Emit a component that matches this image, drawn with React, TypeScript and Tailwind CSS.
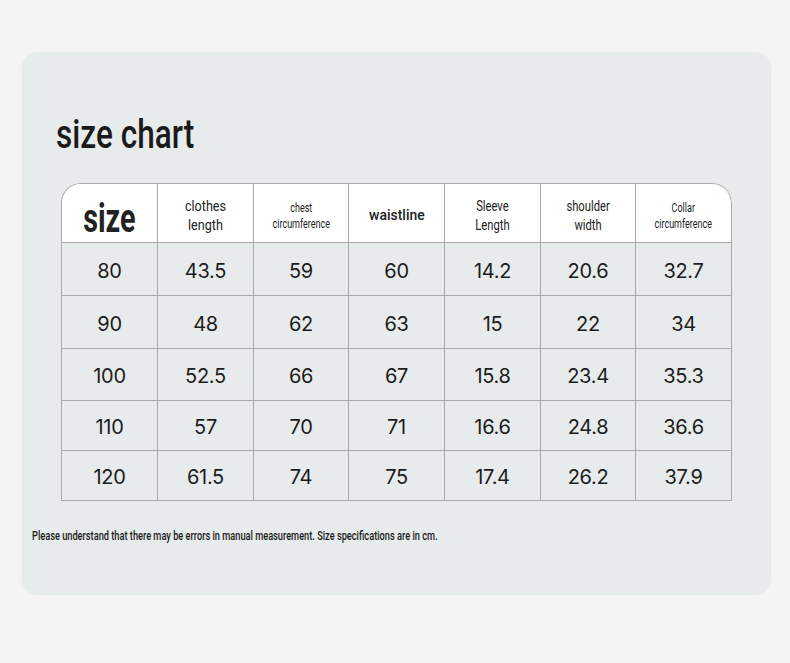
const COLS = ['w-[96px]', 'w-[96px]', 'w-[95px]', 'w-[96px]', 'w-[96px]', 'w-[95px]', 'w-[96px]']

const ROWS: { h: string; values: string[] }[] = [
  { h: 'h-[53px]', values: ['80', '43.5', '59', '60', '14.2', '20.6', '32.7'] },
  { h: 'h-[53px]', values: ['90', '48', '62', '63', '15', '22', '34'] },
  { h: 'h-[52px]', values: ['100', '52.5', '66', '67', '15.8', '23.4', '35.3'] },
  { h: 'h-[50px]', values: ['110', '57', '70', '71', '16.6', '24.8', '36.6'] },
  { h: 'h-[50px]', values: ['120', '61.5', '74', '75', '17.4', '26.2', '37.9'] },
]

// condensed look: Roboto squeezed horizontally
const cond = "font-['Roboto',sans-serif]"

function HeaderCell({ children, className = '', textClass = '' }: { children: React.ReactNode; className?: string; textClass?: string }) {
  return (
    <div className={`flex items-center justify-center pt-[5px] text-center border-r border-b border-[#a9a9a9] text-[#222] ${className}`}>
      <span className={`inline-block whitespace-nowrap ${cond} ${textClass}`}>{children}</span>
    </div>
  )
}

export default function App() {
  return (
    <div className="w-[790px] h-[663px] bg-[#f4f4f4] pt-[52px] pl-[22px]">
      <div className="w-[749px] h-[543px] rounded-[16px] bg-[#e8ebeb] shadow-[0_0_2px_rgba(0,0,0,0.04)] pt-[58px]">
        <h1 className={`ml-[34px] inline-block origin-left scale-x-[0.77] text-[41px] leading-[48px] font-medium text-[#1a1a1a] ${cond}`}>
          size chart
        </h1>

        <div className="ml-[39px] mt-[25px] w-[671px] border-l border-t border-[#a9a9a9] rounded-t-[20px] overflow-hidden">
          <div className="flex bg-white h-[59px]">
            <div className={`${COLS[0]} flex items-end justify-center border-r border-b border-[#a9a9a9] rounded-tl-[20px]`}>
              <span className={`inline-block scale-x-[0.72] text-[40px] leading-[46px] font-bold text-[#222] ${cond}`}>size</span>
            </div>
            <HeaderCell className={COLS[1]} textClass="scale-x-[0.84] text-[15px] leading-[19px]">clothes<br />length</HeaderCell>
            <HeaderCell className={COLS[2]} textClass="scale-x-[0.75] text-[12px] leading-[16px]">chest<br />circumference</HeaderCell>
            <HeaderCell className={COLS[3]} textClass="scale-x-[0.93] text-[15px] leading-[19px] font-medium">waistline</HeaderCell>
            <HeaderCell className={COLS[4]} textClass="scale-x-[0.8] text-[14px] leading-[19px]">Sleeve<br />Length</HeaderCell>
            <HeaderCell className={COLS[5]} textClass="scale-x-[0.8] text-[14px] leading-[19px]">shoulder<br />width</HeaderCell>
            <HeaderCell className={`${COLS[6]} rounded-tr-[20px]`} textClass="scale-x-[0.75] text-[12px] leading-[16px]">Collar<br />circumference</HeaderCell>
          </div>
          {ROWS.map(row => (
            <div key={row.values[0]} className={`flex ${row.h}`}>
              {row.values.map((v, i) => (
                <div
                  key={i}
                  className={`${COLS[i]} flex items-center justify-center pt-[3px] border-r border-b border-[#a9a9a9] font-['Inter',sans-serif] text-[20px] text-[#1c1c1c] tracking-[-0.3px]`}
                >
                  {v}
                </div>
              ))}
            </div>
          ))}
        </div>

        <p className={`mt-[25px] ml-[10px] inline-block origin-left scale-x-[0.71] whitespace-nowrap text-[13px] font-medium text-[#1a1a1a] ${cond}`}>
          Please understand that there may be errors in manual measurement. Size specifications are in cm.
        </p>
      </div>
    </div>
  )
}
